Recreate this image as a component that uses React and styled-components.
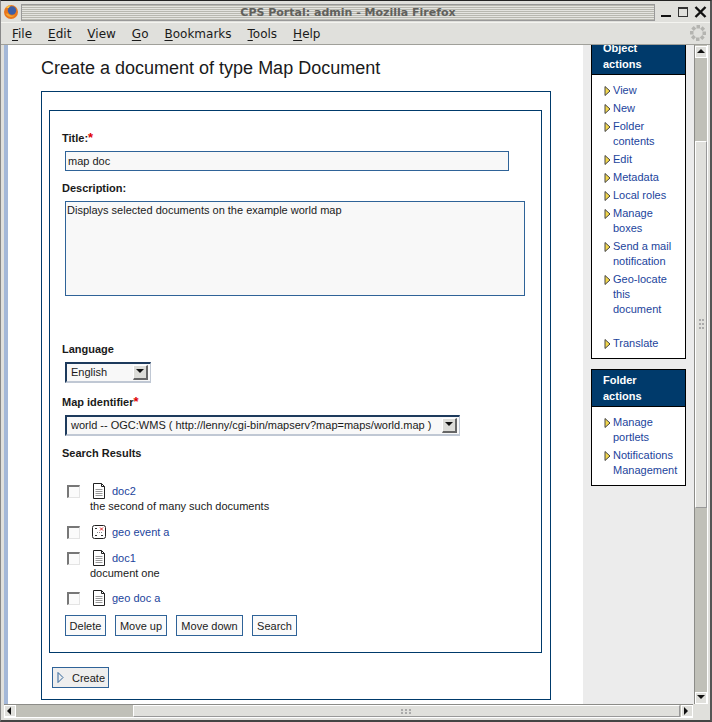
import styled, { createGlobalStyle } from "styled-components"

const GlobalStyle = createGlobalStyle`
  html, body {
    margin: 0;
    padding: 0;
    background: #e0e0dc;
  }
  * {
    box-sizing: border-box;
  }
`

const Win = styled.div`
  width: 712px;
  height: 722px;
  display: flex;
  flex-direction: column;
  overflow: hidden;
  background: #e0e0dc;
  border-top: 1px solid #222;
  border-right: 2px solid #555;
  border-bottom: 2px solid #444;
  border-left: 1px solid #888;
  font-family: "Liberation Sans", Arial, sans-serif;
`
const TitleBar = styled.div`
  height: 21px;
  flex: none;
  display: flex;
  align-items: center;
  padding: 1px 3px 0 2px;
`
const Grooves = styled.div`
  flex: 1;
  height: 17px;
  margin-left: 2px;
  padding-left: 20px;
  display: flex;
  align-items: center;
  justify-content: center;
  border: 1px solid #999;
  background: repeating-linear-gradient(#b8b8b0 0 1px, #e4e4e0 1px 2px);
`
const TitleText = styled.span`
  font-family: "DejaVu Sans", sans-serif;
  font-size: 11px;
  font-weight: bold;
  color: #60605c;
`
const WinButtons = styled.div`
  width: 52px;
  flex: none;
  display: flex;
  align-items: center;
  justify-content: space-between;
  padding-left: 5px;
`
const MenuBar = styled.div`
  height: 23px;
  flex: none;
  display: flex;
  align-items: center;
  padding: 0 11px;
  border-top: 1px solid #f4f4f0;
  border-bottom: 1px solid #a0a09a;
  position: relative;
`
const MenuItem = styled.span`
  font-family: "DejaVu Sans", sans-serif;
  font-size: 12px;
  color: #1a1a1a;
  margin-right: ${(p) => p.$gap}px;
  u {
    text-underline-offset: 2px;
  }
`
const Throbber = styled.svg`
  position: absolute;
  right: 3px;
  top: 1px;
`
const Body = styled.div`
  flex: 1;
  min-height: 0;
  display: flex;
  padding-left: 3px;
`
const Page = styled.div`
  flex: 1;
  min-width: 0;
  display: flex;
  background: #fff;
  border-left: 4px solid #a4b8d8;
  overflow: hidden;
`
const Main = styled.div`
  width: 575px;
  flex: none;
  padding: 13px 0 0 33px;
`
const Heading = styled.h1`
  margin: 0 0 13px;
  font-size: 18px;
  line-height: 20px;
  font-weight: normal;
  color: #1a1a1a;
`
const OuterBox = styled.div`
  width: 510px;
  height: 609px;
  border: 1px solid #003a6b;
  padding: 18px 9px 0 7px;
`
const InnerBox = styled.div`
  width: 493px;
  height: 543px;
  border: 1px solid #003a6b;
  padding: 20px 12px 0 12px;
  margin-bottom: 14px;
`
const Label = styled.div`
  font-size: 11px;
  line-height: 14px;
  font-weight: bold;
  color: #1a1a1a;
  margin-bottom: ${(p) => p.$after}px;
`
const Star = styled.span`
  color: #e00000;
  font-size: 13px;
  line-height: 0;
`
const TextField = styled.div`
  width: 444px;
  height: 20px;
  margin: 0 0 10px 3px;
  padding: 0 2px;
  border: 1px solid #2f6398;
  background: #f8f8f8;
  font-size: 11px;
  line-height: 18px;
  color: #1a1a1a;
`
const TextArea = styled.div`
  width: 460px;
  height: 95px;
  margin: 0 0 46px 3px;
  padding: 2px 1px;
  border: 1px solid #2f6398;
  background: #f8f8f8;
  font-size: 11px;
  line-height: 13px;
  color: #1a1a1a;
`
const Select = styled.div`
  width: ${(p) => p.$width}px;
  height: 21px;
  margin: 0 0 ${(p) => p.$after}px 3px;
  display: flex;
  align-items: center;
  justify-content: space-between;
  padding: 0 2px 1px 4px;
  background: #f8f8f8;
  border-top: 2px solid #1d3a5c;
  border-left: 2px solid #1d3a5c;
  border-right: 1px solid #c0c8d4;
  border-bottom: 2px solid #c0c8d4;
  font-size: 11px;
  color: #1a1a1a;
`
const Arrow = styled.div`
  width: 15px;
  height: 15px;
  flex: none;
  display: flex;
  align-items: center;
  justify-content: center;
  background: #dcdcd8;
  border-top: 1px solid #fff;
  border-left: 1px solid #fff;
  border-right: 2px solid #666;
  border-bottom: 2px solid #666;
`
const Results = styled.div`
  margin-top: 23px;
  margin-left: 5px;
`
const Row = styled.div`
  min-height: ${(p) => p.$height}px;
  display: grid;
  grid-template-columns: 12px 1fr;
  column-gap: 11px;
  align-items: start;
`
const Check = styled.div`
  width: 13px;
  height: 13px;
  margin-top: 2px;
  background: #fbfbfb;
  border-top: 2px solid #777;
  border-left: 2px solid #777;
  border-right: 1px solid #e4e4e4;
  border-bottom: 1px solid #e4e4e4;
`
const ItemHead = styled.div`
  display: flex;
  align-items: center;
  height: 16px;
  gap: 6px;
  padding-left: 2px;
`
const ItemLink = styled.a`
  font-size: 11px;
  color: #1c449c;
  text-decoration: none;
`
const ItemText = styled.div`
  font-size: 11px;
  line-height: 14px;
  color: #1a1a1a;
`
const Buttons = styled.div`
  display: flex;
  gap: 9px;
  margin: 1px 0 0 3px;
`
const Btn = styled.button`
  width: ${(p) => p.$width}px;
  height: 21px;
  padding: 0;
  background: #fafafa;
  border: 1px solid #2f6398;
  font-family: "Liberation Sans", Arial, sans-serif;
  font-size: 11px;
  color: #1a1a1a;
`
const CreateBtn = styled.button`
  width: 57px;
  height: 21px;
  margin-left: 3px;
  padding: 0 0 0 4px;
  display: flex;
  align-items: center;
  gap: 8px;
  background: #eee;
  border: 1px solid #2f6398;
  font-family: "Liberation Sans", Arial, sans-serif;
  font-size: 11px;
  color: #1a1a1a;
`
const Side = styled.div`
  flex: 1;
  background: #ececec;
  padding-left: 8px;
  overflow: hidden;
`
const SideBox = styled.div`
  width: 95px;
  margin: ${(p) => p.$top}px 0 10px;
  background: #fff;
  border: 1px solid #000;
`
const SideTitle = styled.div`
  background: #003a6b;
  color: #fff;
  font-size: 11px;
  line-height: 16px;
  font-weight: bold;
  padding: 2px 11px;
  border-bottom: 1px solid #000;
`
const SideList = styled.div`
  padding: 8px 4px 4px 12px;
`
const SideItem = styled.div`
  display: flex;
  gap: 2px;
  margin-bottom: ${(p) => p.$after || 3}px;
  font-size: 11px;
  line-height: 15px;
  color: #1c449c;
  svg {
    flex: none;
    margin-top: 3px;
  }
`
const VBar = styled.div`
  width: 14px;
  flex: none;
  margin-right: 2px;
  padding-top: 1px;
  display: flex;
  flex-direction: column;
  background: #c0c0b8;
  border-left: 1px solid #8c8c88;
  border-right: 1px solid #fff;
`
const HBar = styled.div`
  height: 14px;
  flex: none;
  margin: 0 17px 2px 3px;
  display: flex;
  align-items: stretch;
  background: #c0c0b8;
  border-top: 1px solid #8c8c88;
  border-bottom: 1px solid #fff;
`
const BarButton = styled.div`
  width: 12px;
  height: 12px;
  flex: none;
  display: flex;
  align-items: center;
  justify-content: center;
  background: #e0e0dc;
  border: 1px solid #fff;
`
const Gap = styled.div`
  flex: ${(p) => (p.$size ? `0 0 ${p.$size}px` : 1)};
`
const Thumb = styled.div`
  flex: ${(p) => `0 0 ${p.$size}px`};
  display: flex;
  align-items: center;
  justify-content: center;
  background: #e0e0dc;
  border-top: 1px solid #fff;
  border-left: 1px solid #fff;
  border-right: 1px solid #999;
  border-bottom: 1px solid #999;
`
const DocPath = () => (
  <svg width="14" height="16" viewBox="0 0 14 16">
    <path d="M1.500.5h8l3 3v12h-11z" fill="#fff" stroke="#222" />
    <path d="M9.500.5v3h3" fill="none" stroke="#222" />
    <path d="M3.500 6.500h7M3.500 8.500h7M3.500 10.500h7M3.500 12.500h7" stroke="#999" />
  </svg>
)
const GeoIcon = () => (
  <svg width="14" height="16" viewBox="0 0 14 16">
    <rect x="0.500" y="1.500" width="13" height="13" rx="2" fill="#fff" stroke="#222" />
    <path d="M3 4.500h2M3 11.500h2M9 11.500h2" stroke="#333" />
    <path d="M5 8.500h6" stroke="#888" strokeDasharray="1 1" />
    <path d="M8 3.500l3 3M11 3.500l-3 3" stroke="#d22" />
  </svg>
)
const Bullet = () => (
  <svg width="7" height="10" viewBox="0 0 7 10">
    <path d="M1 .5l5 4.500-5 4.500z" fill="#f4d84c" stroke="#444" />
  </svg>
)
const Tri = ({ dir }) => {
  const points = {
    up: "0,5 4,1 8,5",
    down: "0,1 8,1 4,5",
    left: "5,0 5,8 1,4",
    right: "1,0 1,8 5,4",
  }
  return (
    <svg width="8" height="8" viewBox="0 0 8 8">
      <polygon points={points[dir]} fill="#111" />
    </svg>
  )
}
const Grip = ({ vertical }) => (
  <svg width={vertical ? 5 : 11} height={vertical ? 11 : 5}>
    {[0, 4, 8].map((n) => (
      <g key={n}>
        <rect x={vertical ? 0 : n} y={vertical ? n : 0} width="2" height="2" fill="#aaa" />
        <rect x={vertical ? 3 : n} y={vertical ? n : 3} width="2" height="2" fill="#aaa" />
      </g>
    ))}
  </svg>
)

const menus = [
  ["F", "ile", 16],
  ["E", "dit", 16],
  ["V", "iew", 16],
  ["G", "o", 16],
  ["B", "ookmarks", 16],
  ["T", "ools", 16],
  ["H", "elp", 0],
]

const objectActions = [
  ["View"],
  ["New"],
  ["Folder", "contents"],
  ["Edit"],
  ["Metadata"],
  ["Local roles"],
  ["Manage", "boxes"],
  ["Send a mail", "notification"],
  ["Geo-locate", "this", "document"],
  ["Translate"],
]

function SideLinks({ items }) {
  return (
    <SideList>
      {items.map((lines) => (
        <SideItem key={lines[0]} $after={lines[0] === "Geo-locate" ? 19 : 3}>
          <Bullet />
          <div>
            {lines.map((l) => (
              <div key={l}>{l}</div>
            ))}
          </div>
        </SideItem>
      ))}
    </SideList>
  )
}

export default function App() {
  return (
    <>
      <GlobalStyle />
      <Win>
        <TitleBar>
          <svg width="16" height="16" viewBox="0 0 16 16">
            <circle cx="8" cy="8" r="7" fill="#e8761c" />
            <circle cx="9" cy="6.500" r="4.200" fill="#3b5ea8" />
            <path d="M3 4c1-2 3-3 5-3-1 1-2 2-2 3-1 0-2 0-3 0z" fill="#f6c244" />
            <path d="M3 10c1 2 3 3 5 3 2 0 3-1 4-2-2 1-4 1-5 0-2-1-3-2-4-1z" fill="#f6a830" />
          </svg>
          <Grooves>
            <TitleText>CPS Portal: admin - Mozilla Firefox</TitleText>
          </Grooves>
          <WinButtons>
            <svg width="12" height="12"><rect x="1" y="9" width="10" height="2" fill="#111" /></svg>
            <svg width="12" height="12"><rect x="1.500" y="1.500" width="9" height="9" fill="none" stroke="#333" /><rect x="1" y="1" width="10" height="2" fill="#333" /></svg>
            <svg width="13" height="12"><path d="M1.500 1l10 10M11.500 1l-10 10" stroke="#111" strokeWidth="2.400" /></svg>
          </WinButtons>
        </TitleBar>
        <MenuBar>
          {menus.map(([k, rest, gap]) => (
            <MenuItem key={k} $gap={gap}>
              <u>{k}</u>
              {rest}
            </MenuItem>
          ))}
          <Throbber width="18" height="18" viewBox="0 0 18 18">
            {[0, 45, 90, 135, 180, 225, 270, 315].map((a) => (
              <rect key={a} x="7.500" y="1" width="3.500" height="3.500" fill="#b4b4b0" transform={`rotate(${a} 9 9)`} />
            ))}
          </Throbber>
        </MenuBar>
        <Body>
          <Page>
            <Main>
              <Heading>Create a document of type Map Document</Heading>
              <OuterBox>
                <InnerBox>
                  <Label $after={6}>Title:<Star>*</Star></Label>
                  <TextField>map doc</TextField>
                  <Label $after={6}>Description:</Label>
                  <TextArea>Displays selected documents on the example world map</TextArea>
                  <Label $after={6}>Language</Label>
                  <Select $width={86} $after={12}>
                    English
                    <Arrow><Tri dir="down" /></Arrow>
                  </Select>
                  <Label $after={6}>Map identifier<Star>*</Star></Label>
                  <Select $width={395} $after={10}>
                    world -- OGC:WMS ( http://lenny/cgi-bin/mapserv?map=maps/world.map )
                    <Arrow><Tri dir="down" /></Arrow>
                  </Select>
                  <Label $after={0}>Search Results</Label>
                  <Results>
                    <Row $height={41}>
                      <Check />
                      <div>
                        <ItemHead><DocPath /><ItemLink>doc2</ItemLink></ItemHead>
                        <ItemText>the second of many such documents</ItemText>
                      </div>
                    </Row>
                    <Row $height={26}>
                      <Check />
                      <ItemHead><GeoIcon /><ItemLink>geo event a</ItemLink></ItemHead>
                    </Row>
                    <Row $height={40}>
                      <Check />
                      <div>
                        <ItemHead><DocPath /><ItemLink>doc1</ItemLink></ItemHead>
                        <ItemText>document one</ItemText>
                      </div>
                    </Row>
                    <Row $height={24}>
                      <Check />
                      <ItemHead><DocPath /><ItemLink>geo doc a</ItemLink></ItemHead>
                    </Row>
                  </Results>
                  <Buttons>
                    <Btn $width={41}>Delete</Btn>
                    <Btn $width={52}>Move up</Btn>
                    <Btn $width={67}>Move down</Btn>
                    <Btn $width={45}>Search</Btn>
                  </Buttons>
                </InnerBox>
                <CreateBtn>
                  <svg width="7" height="11" viewBox="0 0 7 11">
                    <path d="M1 .5l5 5-5 5z" fill="none" stroke="#2f6398" />
                  </svg>
                  Create
                </CreateBtn>
              </OuterBox>
            </Main>
            <Side>
              <SideBox $top={-8}>
                <SideTitle>Object<br />actions</SideTitle>
                <SideLinks items={objectActions} />
              </SideBox>
              <SideBox $top={0}>
                <SideTitle>Folder<br />actions</SideTitle>
                <SideLinks items={[["Manage", "portlets"], ["Notifications", "Management"]]} />
              </SideBox>
            </Side>
          </Page>
          <VBar>
            <BarButton><Tri dir="up" /></BarButton>
            <Gap $size={83} />
            <Thumb $size={367}><Grip vertical /></Thumb>
            <Gap />
            <BarButton><Tri dir="down" /></BarButton>
          </VBar>
        </Body>
        <HBar>
          <BarButton><Tri dir="left" /></BarButton>
          <Gap $size={117} />
          <Thumb $size={547}><Grip /></Thumb>
          <Gap />
          <BarButton><Tri dir="right" /></BarButton>
        </HBar>
      </Win>
    </>
  )
}
